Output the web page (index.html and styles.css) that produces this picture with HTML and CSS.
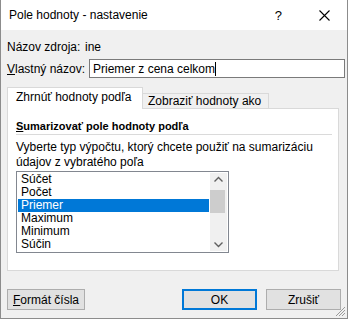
FILE: index.html
```html
<!DOCTYPE html>
<html lang="sk">
  <head>
    <meta charset="UTF-8" />
    <title>Pole hodnoty - nastavenie</title>
    <link rel="stylesheet" href="styles.css">
  </head>
  <body>
    <div class="window">
      <div class="titlebar">
        <span class="title">Pole hodnoty - nastavenie</span>
        <span class="help">?</span>
        <svg class="close" width="11" height="11" viewBox="0 0 11 11">
          <path d="M0.5 0.5 L10.5 10.5 M10.5 0.5 L0.5 10.5" stroke="#000" stroke-width="1.1" fill="none" />
        </svg>
      </div>

      <div class="content">
        <div class="row source">
          <span class="label">Názov zdroja:</span>
          <span>ine</span>
        </div>
        <div class="row custom">
          <label class="label"><u>V</u>lastný názov:</label>
          <div class="input">Priemer z cena celkom<span class="caret"></span></div>
        </div>

        <div class="tabs">
          <div class="tab active">Zhrnúť hodnoty podľa</div>
          <div class="tab">Zobraziť hodnoty ako</div>
        </div>
        <div class="panel">
          <div class="heading"><u>S</u>umarizovať pole hodnoty podľa</div>
          <div class="sep"></div>
          <p class="desc">Vyberte typ výpočtu, ktorý chcete použiť na sumarizáciu údajov z vybratého poľa</p>
          <div class="listbox">
            <ul class="items">
              <li>Súčet</li>
              <li>Počet</li>
              <li class="selected">Priemer</li>
              <li>Maximum</li>
              <li>Minimum</li>
              <li>Súčin</li>
            </ul>
            <div class="scrollbar">
              <svg width="17" height="14" viewBox="0 0 17 14">
                <path d="M4.5 8.5 L8.5 4.5 L12.5 8.5" stroke="#606060" stroke-width="1.4" fill="none" />
              </svg>
              <div class="track"><div class="thumb"></div></div>
              <svg width="17" height="14" viewBox="0 0 17 14">
                <path d="M4.5 5.5 L8.5 9.5 L12.5 5.5" stroke="#606060" stroke-width="1.4" fill="none" />
              </svg>
            </div>
          </div>
        </div>

        <div class="buttons">
          <button class="btn"><u>F</u>ormát čísla</button>
          <span class="spacer"></span>
          <button class="btn default">OK</button>
          <button class="btn">Zrušiť</button>
        </div>
      </div>

      <svg class="grip" width="10" height="10" viewBox="0 0 10 10">
        <path d="M9 3 L3 9 M9 6 L6 9 M9 0 L0 9" stroke="#9a9a9a" stroke-width="1" fill="none" />
      </svg>
    </div>
  </body>
</html>
```

FILE: styles.css
```css
body {
  margin: 0;
  font-family: "Liberation Sans", Arial, sans-serif;
  font-size: 12px;
  color: #000;
  background: #f0f0f0;
}
.window {
  position: relative;
  width: 348px;
  height: 319px;
  box-sizing: border-box;
  border: 1px solid #8c8c8c;
  border-top: none;
  background: #f0f0f0;
  display: flex;
  flex-direction: column;
}

/* Title bar */
.titlebar {
  height: 30px;
  background: #fff;
  display: flex;
  align-items: center;
  padding-left: 8px;
}
.title {
  flex: 1;
}
.help {
  font-size: 13px;
  margin-right: 37px;
}
.close {
  margin-right: 17px;
}

/* Content */
.content {
  flex: 1;
  display: flex;
  flex-direction: column;
  padding: 7px 0 0 6px;
}
.row {
  display: flex;
  align-items: center;
  height: 19px;
}
.source .label {
  width: 78px;
}
.custom {
  margin-top: 3px;
}
.custom .label {
  width: 82px;
}
.input {
  width: 251px;
  height: 17px;
  border: 1px solid #7a7a7a;
  background: #fff;
  display: flex;
  align-items: center;
  padding-left: 3px;
  box-sizing: content-box;
}
.caret {
  display: inline-block;
  width: 1px;
  height: 14px;
  background: #000;
}

/* Tabs */
.tabs {
  display: flex;
  align-items: flex-end;
  margin-top: 9px;
  height: 21px;
}
.tab {
  box-sizing: border-box;
  height: 15px;
  width: 126px;
  padding-left: 5px;
  border: 1px solid #d9d9d9;
  border-bottom: none;
  border-left: none;
  line-height: 14px;
}
.tab.active {
  height: 22px;
  width: 136px;
  padding-left: 8px;
  border-left: 1px solid #d9d9d9;
  background: #fff;
  line-height: 19px;
  position: relative;
  z-index: 1;
  margin-bottom: -1px;
}
.panel {
  width: 332px;
  height: 163px;
  box-sizing: border-box;
  border: 1px solid #d9d9d9;
  background: #fff;
  padding: 10px 6px 0 8px;
}
.heading {
  font-weight: bold;
  font-size: 11px;
  line-height: 15px;
}
.sep {
  height: 1px;
  background: #dadada;
}
.desc {
  margin: 5px 0 0;
  width: 300px;
  line-height: 15px;
}

/* Listbox */
.listbox {
  margin-top: 1px;
  width: 213px;
  height: 82px;
  box-sizing: border-box;
  border: 1px solid #828790;
  display: flex;
  padding: 1px;
}
.items {
  list-style: none;
  margin: 0;
  padding: 0;
  flex: 1;
}
.items li {
  height: 13px;
  line-height: 13px;
  padding-left: 3px;
}
.items li.selected {
  background: #0078d7;
  color: #fff;
  margin-right: 1px;
}
.scrollbar {
  width: 17px;
  background: #f0f0f0;
  display: flex;
  flex-direction: column;
}
.track {
  flex: 1;
  padding-top: 3px;
}
.thumb {
  width: 15px;
  height: 23px;
  background: #cdcdcd;
}

/* Buttons */
.buttons {
  display: flex;
  margin-top: 18px;
  padding-right: 6px;
}
.spacer {
  flex: 1;
}
.btn {
  font: inherit;
  height: 21px;
  width: 75px;
  box-sizing: border-box;
  border: 1px solid #adadad;
  background: #e1e1e1;
  padding: 0;
  color: #000;
}
.btn:first-child {
  width: 78px;
}
.btn.default {
  border: 2px solid #0078d7;
  margin-right: 9px;
}
.grip {
  position: absolute;
  right: 1px;
  bottom: 1px;
}
```
